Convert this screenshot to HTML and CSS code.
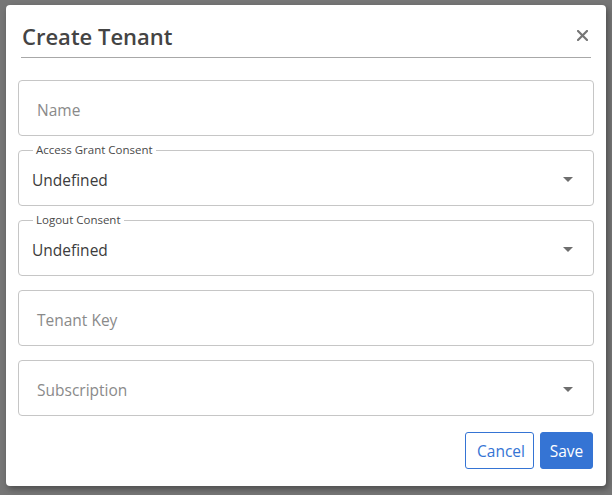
FILE: index.html
```html
<!DOCTYPE html>
<html>
<head>
<meta charset="utf-8">
<link rel="stylesheet" href="styles.css">
</head>
<body>
<div class="dialog">
  <div class="header">
    <h1 class="title">Create Tenant</h1>
    <svg class="close" width="11" height="11" viewBox="0 0 11 11"><path d="M1 1L10 10M10 1L1 10" stroke="#767676" stroke-width="2.2" stroke-linecap="square"/></svg>
  </div>
  <div class="fields">
    <div class="field"><span class="placeholder">Name</span></div>
    <div class="field select">
      <span class="legend">Access Grant Consent</span>
      <span class="value">Undefined</span>
      <span class="arrow"></span>
    </div>
    <div class="field select">
      <span class="legend">Logout Consent</span>
      <span class="value">Undefined</span>
      <span class="arrow"></span>
    </div>
    <div class="field"><span class="placeholder">Tenant Key</span></div>
    <div class="field select">
      <span class="placeholder">Subscription</span>
      <span class="arrow"></span>
    </div>
  </div>
  <div class="actions">
    <button class="btn btn-outline">Cancel</button>
    <button class="btn btn-primary">Save</button>
  </div>
</div>
</body>
</html>
```

FILE: styles.css
```css
html, body {
  margin: 0;
  padding: 0;
  height: 100%;
}
body {
  background: #767676;
  font-family: "Open Sans", "Noto Sans", sans-serif;
  padding: 5px 0 0 6px;
  box-sizing: border-box;
}
.dialog {
  width: 600px;
  height: 481px;
  background: #fff;
  border-radius: 4px;
  box-shadow: 2px 3px 6px rgba(0,0,0,0.35);
  padding: 0 12px;
  box-sizing: border-box;
  display: flex;
  flex-direction: column;
}
.header {
  margin: 0 3px;
  padding: 16px 0 6px 1px;
  border-bottom: 1px solid #a8a8a8;
  display: flex;
  align-items: center;
  justify-content: space-between;
}
.title {
  margin: 0;
  font-size: 22px;
  line-height: 30px;
  font-weight: 600;
  color: #444;
}
.close {
  display: block;
  margin-right: 3px;
  margin-top: -1px;
}
.fields {
  margin-top: 22px;
  display: flex;
  flex-direction: column;
  gap: 14px;
}
.field {
  position: relative;
  height: 56px;
  border: 1px solid #c6c6c6;
  border-radius: 4px;
  box-sizing: border-box;
  display: flex;
  align-items: center;
  padding: 0 18px;
  font-size: 15.5px;
}
.placeholder {
  color: #8a8a8a;
  padding-top: 3px;
}
.select .value {
  color: #3c3c3c;
  margin-left: -5px;
  padding-top: 3px;
}
.legend {
  position: absolute;
  left: 14px;
  top: -9px;
  background: #fff;
  padding: 0 3px;
  font-size: 11.5px;
  line-height: 16px;
  color: #4a4a4a;
}
.arrow {
  position: absolute;
  right: 20px;
  top: 26px;
  width: 0;
  height: 0;
  border-left: 5px solid transparent;
  border-right: 5px solid transparent;
  border-top: 5px solid #6e6e6e;
}
.actions {
  margin-top: 16px;
  display: flex;
  justify-content: flex-end;
  gap: 6px;
  padding-right: 1px;
}
.btn {
  font-family: inherit;
  font-size: 15.5px;
  height: 37px;
  border-radius: 3px;
  padding: 0 11px;
  cursor: pointer;
}
.btn-outline {
  background: #fff;
  color: #3574d4;
  border: 1px solid #3574d4;
  width: 69px;
}
.btn-primary {
  background: #3574d4;
  color: #fff;
  border: 1px solid #3574d4;
  width: 53px;
  padding: 0;
}
```
